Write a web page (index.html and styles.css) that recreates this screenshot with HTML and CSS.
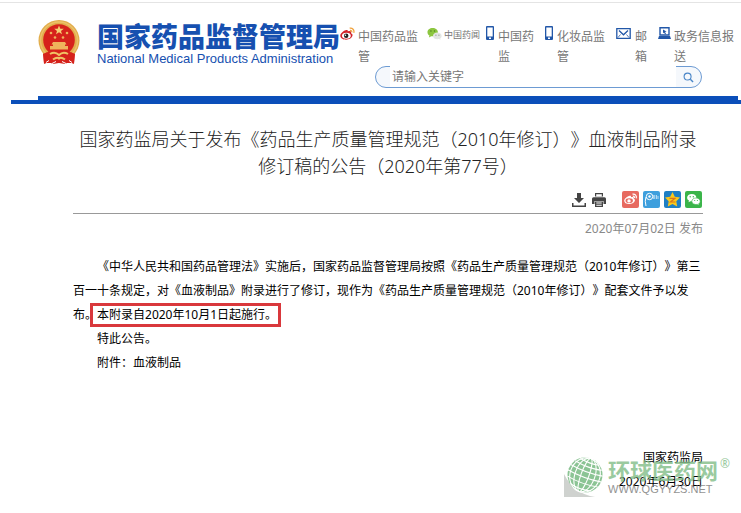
FILE: index.html
```
<!DOCTYPE html>
<html lang="zh-CN">
<head>
  <meta charset="UTF-8">
  <meta name="viewport" content="width=device-width, initial-scale=1.0">
  <title>国家药品监督管理局</title>
  <link rel="stylesheet" href="styles.css">
</head>
<body>
  <header class="header">
    <div class="header-inner">
      <a class="brand" href="#">
        <svg class="emblem" viewBox="0 0 42 44" aria-hidden="true">
          <path fill="#cf2a20" d="M5 28 L37 28 L36 44 L31 42 L27 44 L21 43 L15 44 L11 42 L6 44z"/>
          <circle cx="21" cy="20.500" r="20.500" fill="#e2ad4c"/>
          <circle cx="21" cy="20.500" r="18.500" fill="none" stroke="#ebc26a" stroke-width="1.500"/>
          <circle cx="21" cy="20" r="15.800" fill="#d6221b"/>
          <path fill="#f5cf72" d="M21 5.500l1.300 3.300h3.500l-2.800 2.100 1 3.400-3-2-3 2 1-3.400-2.800-2.100h3.500z"/>
          <g fill="#efb45c">
            <circle cx="13" cy="13" r="1.300"/><circle cx="29" cy="13" r="1.300"/>
            <circle cx="17" cy="17.500" r="1.300"/><circle cx="25" cy="17.500" r="1.300"/>
            <path d="M15 22h12l1.500 2.500H27V26h3v3.500H12V26h3v-1.500h-1.500z"/>
          </g>
          <path fill="#d6221b" d="M5 34q8-5 16 1 8-6 16-1l-1 9H6z"/>
          <path fill="none" stroke="#f0c264" stroke-width="2" d="M12 34q5-3 9 1 4-4 9-1M15 39.500q4-3 6-1 2-2 6 1"/>
          <path fill="none" stroke="#fff" d="M8 42.500l3-2M14 43.500l4-2M28 43.500l-4-2M34 42.500l-3-2"/>
        </svg>
        <span class="brand-text">
          <span class="brand-name">国家药品监督管理局</span>
          <span class="brand-en">National Medical Products Administration</span>
        </span>
      </a>

      <div class="header-side">
        <nav class="nav">
          <a class="nav-link nav-five" href="#">
            <svg class="icon-wide" viewBox="0 0 16 16" aria-hidden="true">
              <path fill="#d2232a" d="M6 4c1.800-.8 2.600 0 2.300 1.300 2.500-.9 4.200-.1 3.400 1.900 1.500.5 2 1.600 1.500 3C12.400 12.700 9.600 14 6.500 14 3 14 .3 12.300.3 9.800.3 7.500 3.400 4.700 6 4z"/>
              <ellipse cx="6.800" cy="9.800" rx="4.700" ry="3.200" fill="#fff"/>
              <circle cx="6.600" cy="9.900" r="2.400" fill="#222"/>
              <circle cx="5.800" cy="9.400" r=".8" fill="#fff"/>
              <path fill="none" stroke="#f0a13a" stroke-width="1.300" d="M10.300 1.800c3-.6 5.300 1.900 4.400 5M10.600 4.100c1.500-.2 2.300.8 1.900 2.100"/>
            </svg>
            <span>中国药品监管</span>
          </a>
          <a class="nav-link nav-small" href="#">
            <svg class="icon-wide" viewBox="0 0 16 16" aria-hidden="true">
              <path fill="#8cc63f" d="M6 1.500c3.200 0 5.600 2 5.600 4.500S9.200 10.500 6 10.500l-1.500-.2L2 11.800l.6-2.200C1.300 8.700.5 7.500.5 6 .5 3.500 2.900 1.500 6 1.500z"/>
              <path fill="#e3e6e3" d="M11 6.500c2.600 0 4.600 1.500 4.600 3.500 0 1.100-.6 2-1.500 2.700l.4 1.500-1.700-.8c-3.400.7-6.400-.9-6.400-3.400 0-2 2-3.500 4.600-3.500z"/>
              <g fill="#4f7f22"><circle cx="4.200" cy="4.800" r=".8"/><circle cx="8" cy="4.800" r=".8"/></g>
              <g fill="#888"><circle cx="9.500" cy="9.200" r=".6"/><circle cx="12.700" cy="9.200" r=".6"/></g>
            </svg>
            <span>中国药闻</span>
          </a>
          <a class="nav-link nav-three" href="#">
            <svg class="icon-phone" viewBox="0 0 8 14" aria-hidden="true">
              <path fill="#2257a8" fill-rule="evenodd" d="M1 0h6Q8 0 8 1v12Q8 14 7 14H1Q0 14 0 13V1Q0 0 1 0zM1.300 1.500v9h5.400v-9zM3 11.500V13h2v-1.500z"/>
            </svg>
            <span>中国药监</span>
          </a>
          <a class="nav-link nav-four" href="#">
            <svg class="icon-phone" viewBox="0 0 8 14" aria-hidden="true">
              <path fill="#2257a8" fill-rule="evenodd" d="M1 0h6Q8 0 8 1v12Q8 14 7 14H1Q0 14 0 13V1Q0 0 1 0zM1.300 1.500v9h5.400v-9zM3 11.500V13h2v-1.500z"/>
            </svg>
            <span>化妆品监管</span>
          </a>
          <a class="nav-link nav-one" href="#">
            <svg class="icon-wide" viewBox="0 0 15 16" aria-hidden="true">
              <path fill="none" stroke="#2257a8" stroke-width="1.300" d="M.8 2.700h13.400v9.600H.8zM3 4.500l4.500 4.300L12 4.500"/>
              <path fill="none" stroke="#2257a8" stroke-width=".8" d="M2 11.500l2.500-3M13 11.500l-2.500-3"/>
            </svg>
            <span>邮箱</span>
          </a>
          <a class="nav-link nav-five" href="#">
            <svg class="icon-pc" viewBox="0 0 13 14" aria-hidden="true">
              <path fill="none" stroke="#2257a8" stroke-width="1.400" d="M2 1.700h9v7.300H2z"/>
              <path fill="#2257a8" d="M1 10h11l1 3H0zM5 3.500l3.500 2L7 6l1 1.700-1 .5-1-1.700-1 .7z"/>
            </svg>
            <span>政务信息报送</span>
          </a>
        </nav>
        <form class="search">
          <input class="search-input" type="text" placeholder="请输入关键字" aria-label="请输入关键字">
          <button class="search-btn" type="button" aria-label="搜索">
            <svg class="search-icon" viewBox="0 0 12 12" aria-hidden="true">
              <circle cx="5" cy="5" r="3.800" fill="none" stroke="#4a86c8" stroke-width="1.200"/>
              <path d="M8 8l3 3" stroke="#4a86c8" stroke-width="1.500"/>
            </svg>
          </button>
        </form>
      </div>
    </div>
  </header>

  <main class="article">
    <h1 class="title">国家药监局关于发布《药品生产质量管理规范（2010年修订）》血液制品附录修订稿的公告（2020年第77号）</h1>

    <div class="tools">
      <button class="tool" type="button" aria-label="下载">
        <svg viewBox="0 0 14 14" aria-hidden="true">
          <path fill="#444" d="M5 0h4v5h3L7 10 2 5h3zM0 10h1.500v2.500h11V10H14v4H0z"/>
        </svg>
      </button>
      <button class="tool" type="button" aria-label="打印">
        <svg viewBox="0 0 14 14" aria-hidden="true">
          <path fill="#444" fill-rule="evenodd" d="M3 0h8v3.500H3zM4.200 1.200v2h5.600v-2zM1.500 4.200h11Q14 4.200 14 5.700V11h-2.500V8h-9v3H0V5.700Q0 4.200 1.500 4.200zM3 8.500h8V14H3zM4.300 9.600v1h5.400v-1zM4.300 11.700v1h5.400v-1z"/>
        </svg>
      </button>
      <div class="share">
        <button class="share-btn weibo" type="button" aria-label="微博">
          <svg viewBox="0 0 17 17" aria-hidden="true">
            <path fill="#fff" d="M7 5c1.500-.5 2.200 0 2 1.200 1.900-.6 3.200 0 2.700 1.500 1.100.4 1.500 1.200 1.100 2.300-.7 1.900-3 3-5.600 3-2.900 0-5-1.300-5-3.300C2.200 7.900 4.900 5.600 7 5z"/>
            <ellipse cx="7.200" cy="9.700" rx="3.700" ry="2.400" fill="#e76a60"/>
            <circle cx="7" cy="9.900" r="1.700" fill="#fff"/>
            <path fill="none" stroke="#fff" stroke-width="1.200" d="M10.500 3.200c2.600-.5 4.500 1.600 3.700 4.200M10.800 5.200c1.200-.1 1.900.7 1.600 1.800"/>
          </svg>
        </button>
        <button class="share-btn tencent" type="button" aria-label="腾讯微博">
          <svg viewBox="0 0 17 17" aria-hidden="true">
            <path fill="none" stroke="#fff" d="M3 15Q1.500 10 3 6"/>
            <circle cx="6.500" cy="5.500" r="3.200" fill="none" stroke="#fff"/>
            <circle cx="6.500" cy="5.500" r="1.200" fill="#fff"/>
            <path fill="none" stroke="#d3eafa" stroke-width=".8" d="M11 4v4M10 5h2.500M13.500 4v4M15 5v3M10 7h2.500"/>
          </svg>
        </button>
        <button class="share-btn qzone" type="button" aria-label="QQ空间">
          <svg viewBox="0 0 17 17" aria-hidden="true">
            <path fill="#fbc91b" d="M8.500 1l2.300 4.800 5.200.7-3.700 3.700.9 5.300-4.700-2.500-4.700 2.500.9-5.300L1 6.500l5.200-.7z"/>
            <path fill="none" stroke="#d9741d" stroke-width="1.200" d="M5.500 7.300h5.500l-4.500 3.700h5"/>
          </svg>
        </button>
        <button class="share-btn wechat" type="button" aria-label="微信">
          <svg viewBox="0 0 17 17" aria-hidden="true">
            <path fill="#fff" d="M6.800 3c2.700 0 4.600 1.600 4.600 3.700S9.500 10.300 6.800 10.300l-1.300-.1-2 1.100.5-1.700C2.800 8.900 2.100 7.900 2.100 6.700 2.100 4.600 4.100 3 6.800 3z"/>
            <path fill="#fff" stroke="#3bb54a" stroke-width=".6" d="M11 7c2.400 0 4.200 1.400 4.200 3.200 0 1-.6 1.900-1.400 2.500l.4 1.500-1.700-.8c-3 .6-5.700-.9-5.700-3.200C6.800 8.400 8.600 7 11 7z"/>
            <g fill="#3bb54a"><circle cx="5.200" cy="5.700" r=".7"/><circle cx="8.300" cy="5.700" r=".7"/><circle cx="9.700" cy="9.500" r=".6"/><circle cx="12.400" cy="9.500" r=".6"/></g>
          </svg>
        </button>
      </div>
    </div>

    <p class="date">2020年07月02日 发布</p>

    <div class="content">
      <p>《中华人民共和国药品管理法》实施后，国家药品监督管理局按照《药品生产质量管理规范（2010年修订）》第三百一十条规定，对《血液制品》附录进行了修订，现作为《药品生产质量管理规范（2010年修订）》配套文件予以发布。<span class="marked">本附录自2020年10月1日起施行。</span></p>
      <p>特此公告。</p>
      <p>附件：血液制品</p>
    </div>

    <div class="sign">
      <p>国家药监局</p>
      <p>2020年6月30日</p>
      <div class="watermark">
        <svg class="globe" viewBox="0 0 42 42" aria-hidden="true">
          <path fill="#c4c8c4" d="M0 18v23h31Q10 38 0 18z"/>
          <circle cx="21" cy="19" r="17.500" fill="#6fb67a"/>
          <g fill="none" stroke="#fff" stroke-width="1.100" transform="rotate(20 21 19)">
            <ellipse cx="21" cy="19" rx="4" ry="17.500"/>
            <ellipse cx="21" cy="19" rx="10" ry="17.500"/>
            <ellipse cx="21" cy="19" rx="15" ry="17.500"/>
            <path d="M4 14q17 3 34 0M3 20q18 3 36 0M5 26q16 3 32 0M7 9q14 3 28 0M11 5q10 2 20 0M10 32q11 3 22 0"/>
          </g>
        </svg>
        <div class="mark-text">
          <span class="mark-name">环球医药网</span>
          <span class="mark-url">WWW.QGYYZS.NET</span>
        </div>
        <span class="mark-reg">®</span>
      </div>
    </div>
  </main>
</body>
</html>
```
FILE: styles.css
```
* {
  box-sizing: border-box;
}
body {
  margin: 0;
  padding-top: 2px;
  background-color: #fff;
  font-family: "Noto Sans", "Noto Sans CJK SC", sans-serif;
  font-size: 12px;
  line-height: 24px;
  color: #000;
  text-spacing-trim: space-all;
}
p,
h1 {
  margin: 0;
}
a {
  color: inherit;
  text-decoration: none;
}
svg {
  display: block;
}
button {
  padding: 0;
  border: none;
  background: none;
  cursor: pointer;
}

/* header */
.header {
  border-top: 1px solid #e4e4e4;
}
.header::after {
  content: "";
  display: block;
  height: 4px;
  margin-left: 11px;
  background-color: #0b4fba;
}
.header-inner {
  display: flex;
  align-items: flex-start;
  height: 97px;
  margin: 0 3px 0 38px;
  border-bottom: 4px solid #0b4fba;
}
.brand {
  display: flex;
  flex: none;
  gap: 17px;
  width: 302px;
  padding-top: 17px;
}
.emblem {
  width: 42px;
  height: 44px;
}
.brand-text {
  display: flex;
  flex-direction: column;
  padding-top: 2px;
  color: #1650b0;
  white-space: nowrap;
}
.brand-name {
  font-size: 27px;
  line-height: 30px;
  font-weight: 900;
}
.brand-en {
  font-family: "Liberation Sans", Arial, sans-serif;
  font-size: 13px;
  line-height: 14px;
}
.header-side {
  flex: 1;
  padding-top: 23px;
}
.nav {
  display: flex;
  gap: 11px;
  height: 40px;
  color: #777;
  line-height: 20px;
}
.nav-link {
  display: flex;
  flex: none;
  align-items: flex-start;
  gap: 3px;
}
.nav-link:hover {
  color: #0b4fba;
}
.nav-link svg {
  flex: none;
}
.nav-link span {
  padding-top: 1px;
}
.nav-five span {
  width: 60px;
}
.nav-four,
.nav-three,
.nav-one {
  gap: 4px;
}
.nav-four span {
  width: 48px;
}
.nav-three span {
  width: 36px;
}
.nav-one span {
  width: 12px;
}
.nav-small {
  gap: 2px;
  margin: 0 -5px 0 -2px;
  font-size: 9px;
  line-height: 16px;
}
.icon-wide {
  width: 15px;
  height: 16px;
}
.icon-phone {
  width: 8px;
  height: 14px;
}
.icon-pc {
  width: 13px;
  height: 14px;
}
.search {
  display: flex;
  height: 22px;
  margin: 0 36px 0 35px;
  padding-left: 14px;
  border: 1px solid #6d9bd3;
  border-radius: 11px;
  background-color: #f5f8fc;
}
.search-input {
  flex: 1;
  min-width: 0;
  height: 21px;
  margin-top: -1px;
  padding: 0 2px;
  border: none;
  outline: none;
  background-color: #fff;
  font-family: inherit;
  font-size: 12px;
}
.search-input::placeholder {
  color: #777;
}
.search-btn {
  display: flex;
  align-items: center;
  justify-content: center;
  width: 25px;
}
.search-icon {
  width: 11px;
  height: 11px;
}

/* article */
.article {
  margin: 0 38px 0 73px;
  padding: 22px 0 20px;
}
.title {
  font-size: 18px;
  line-height: 27px;
  font-weight: 300;
  color: #222;
  text-align: center;
}
.tools {
  display: flex;
  align-items: center;
  justify-content: flex-end;
  gap: 6px;
  margin-top: 8px;
  padding: 3px 1px 5px 0;
  border-bottom: 1px solid #999;
}
.tool {
  width: 14px;
  height: 14px;
}
.share {
  display: flex;
  gap: 4px;
  margin-left: 10px;
}
.share-btn {
  width: 17px;
  height: 17px;
  border-radius: 2px;
}
.weibo {
  background-color: #e76a60;
}
.tencent {
  background-color: #3e9fdd;
}
.qzone {
  background-color: #1f7fc4;
}
.wechat {
  background-color: #3bb54a;
}
.date {
  margin-top: 3px;
  color: #8a8a8a;
  text-align: right;
}
.content {
  margin-top: 14px;
}
.content p {
  text-indent: 2em;
}
.marked {
  display: inline-block;
  margin: 0 -4px 0 -7px;
  padding: 0 1px 0 4px;
  border: 3px solid #d9383c;
  line-height: 18px;
  text-indent: 0;
}
.sign {
  position: relative;
  margin-top: 71px;
  text-align: right;
}
.watermark {
  position: absolute;
  top: 10px;
  right: -27px;
  display: flex;
  gap: 2px;
  opacity: 0.8;
  text-align: left;
  white-space: nowrap;
}
.globe {
  width: 42px;
  height: 42px;
}
.mark-text {
  display: flex;
  flex-direction: column;
  padding-top: 2px;
}
.mark-name {
  font-size: 22px;
  line-height: 24px;
  font-weight: 700;
  color: #82bd88;
}
.mark-url {
  font-family: "Liberation Sans", Arial, sans-serif;
  font-size: 11px;
  line-height: 14px;
  color: #777;
}
.mark-reg {
  font-size: 12px;
  line-height: 16px;
  color: #82bd88;
}
```
